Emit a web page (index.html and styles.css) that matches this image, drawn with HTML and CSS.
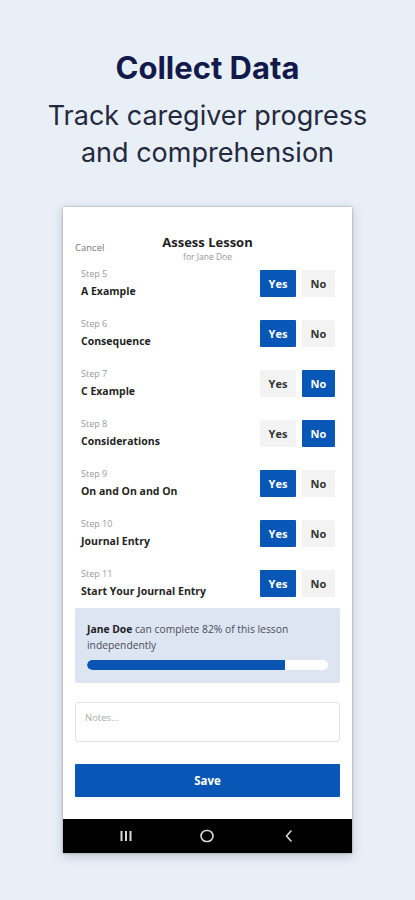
FILE: index.html
```html
<!DOCTYPE html>
<html lang="en">
<head>
<meta charset="utf-8">
<title>Collect Data</title>
<link rel="stylesheet" href="styles.css">
</head>
<body>
<main class="page">
  <h1 class="title">Collect Data</h1>
  <p class="subtitle">Track caregiver progress<br>and comprehension</p>

  <section class="phone">
    <div class="screen">
      <header class="app-header">
        <span class="cancel">Cancel</span>
        <div class="heading">
          <div class="heading-title">Assess Lesson</div>
          <div class="heading-sub">for Jane Doe</div>
        </div>
        <span></span>
      </header>

      <ul class="steps">
        <li class="step">
          <div class="step-text"><div class="step-label">Step 5</div><div class="step-name">A Example</div></div>
          <div class="toggle"><span class="btn yes on">Yes</span><span class="btn no">No</span></div>
        </li>
        <li class="step">
          <div class="step-text"><div class="step-label">Step 6</div><div class="step-name">Consequence</div></div>
          <div class="toggle"><span class="btn yes on">Yes</span><span class="btn no">No</span></div>
        </li>
        <li class="step">
          <div class="step-text"><div class="step-label">Step 7</div><div class="step-name">C Example</div></div>
          <div class="toggle"><span class="btn yes">Yes</span><span class="btn no on">No</span></div>
        </li>
        <li class="step">
          <div class="step-text"><div class="step-label">Step 8</div><div class="step-name">Considerations</div></div>
          <div class="toggle"><span class="btn yes">Yes</span><span class="btn no on">No</span></div>
        </li>
        <li class="step">
          <div class="step-text"><div class="step-label">Step 9</div><div class="step-name">On and On and On</div></div>
          <div class="toggle"><span class="btn yes on">Yes</span><span class="btn no">No</span></div>
        </li>
        <li class="step">
          <div class="step-text"><div class="step-label">Step 10</div><div class="step-name">Journal Entry</div></div>
          <div class="toggle"><span class="btn yes on">Yes</span><span class="btn no">No</span></div>
        </li>
        <li class="step">
          <div class="step-text"><div class="step-label">Step 11</div><div class="step-name">Start Your Journal Entry</div></div>
          <div class="toggle"><span class="btn yes on">Yes</span><span class="btn no">No</span></div>
        </li>
      </ul>

      <div class="summary">
        <p class="summary-text"><span class="summary-name">Jane Doe</span> can complete 82% of this lesson independently</p>
        <div class="bar"><div class="bar-fill" style="width: 82%"></div></div>
      </div>

      <div class="notes">Notes...</div>

      <div class="save">Save</div>
    </div>

    <nav class="navbar">
      <svg class="nav-icon" width="14" height="12" viewBox="0 0 14 12"><rect x="1.5" y="1" width="2" height="10" fill="#d8d8d8"/><rect x="6" y="1" width="2" height="10" fill="#d8d8d8"/><rect x="10.5" y="1" width="2" height="10" fill="#d8d8d8"/></svg>
      <svg class="nav-icon" width="16" height="16" viewBox="0 0 16 16"><rect x="2" y="2.5" width="12" height="11" rx="5.5" fill="none" stroke="#d8d8d8" stroke-width="1.6"/></svg>
      <svg class="nav-icon" width="12" height="14" viewBox="0 0 12 14"><path d="M8 2 L3.5 7 L8 12" fill="none" stroke="#d8d8d8" stroke-width="1.6" stroke-linecap="round" stroke-linejoin="round"/></svg>
    </nav>
  </section>
</main>
</body>
</html>
```
FILE: styles.css
```css
* { box-sizing: border-box; }
html, body { margin: 0; padding: 0; }
body {
  background: #e9eff7;
  font-family: "Open Sans", "Liberation Sans", sans-serif;
  width: 415px;
  height: 900px;
  overflow: hidden;
}
.page {
  display: flex;
  flex-direction: column;
  align-items: center;
  padding-top: 50px;
}
.title {
  margin: 0;
  font-family: Inter, "Liberation Sans", sans-serif;
  font-weight: 700;
  font-size: 31px;
  line-height: 36px;
  color: #121a4c;
}
.subtitle {
  margin: 11px 0 0;
  font-family: Inter, "Liberation Sans", sans-serif;
  font-weight: 400;
  font-size: 27px;
  line-height: 37px;
  color: #25293e;
  text-align: center;
}
.phone {
  margin-top: 36px;
  width: 289px;
  background: #fff;
  box-shadow: 0 0 2px rgba(0,0,0,0.35), 0 3px 10px rgba(60,70,90,0.25);
  display: flex;
  flex-direction: column;
}
.screen {
  padding: 0 12px;
  display: flex;
  flex-direction: column;
}
.app-header {
  padding-top: 27px;
  display: grid;
  grid-template-columns: 60px 1fr 60px;
  align-items: center;
  margin-bottom: -5px;
}
.cancel {
  font-size: 9.5px;
  color: #777;
  margin-bottom: 2px;
}
.heading { text-align: center; }
.heading-title {
  font-size: 13px;
  font-weight: 700;
  line-height: 16px;
  color: #1e1e1e;
}
.heading-sub {
  font-size: 8.5px;
  line-height: 13px;
  color: #999;
}
.steps {
  list-style: none;
  margin: 0;
  padding: 0 5px 0 6px;
}
.step {
  height: 50px;
  display: flex;
  align-items: center;
  justify-content: space-between;
}
.step-label {
  font-size: 9px;
  line-height: 14px;
  color: #9a9a9a;
}
.step-name {
  margin-top: 1px;
  font-size: 10.5px;
  line-height: 18px;
  font-weight: 700;
  color: #1f1f1f;
}
.toggle {
  display: flex;
  gap: 6px;
}
.btn {
  height: 27px;
  display: flex;
  align-items: center;
  justify-content: center;
  font-size: 11px;
  font-weight: 700;
  color: #333;
  background: #f3f3f3;
  border-radius: 1px;
}
.btn.yes { width: 36px; }
.btn.no { width: 33px; }
.btn.on {
  background: #0856b5;
  color: #fff;
}
.summary {
  background: #dde4f2;
  padding: 14px 12px 13px;
  border-radius: 2px;
}
.summary-text {
  margin: 0;
  font-size: 10.3px;
  line-height: 15.5px;
  color: #4a4d58;
}
.summary-name {
  color: #222;
  font-weight: 700;
}
.bar {
  margin-top: 7px;
  height: 10px;
  background: #fff;
  border-radius: 5px;
  overflow: hidden;
}
.bar-fill {
  height: 100%;
  background: #0a55b4;
  border-radius: 5px 0 0 5px;
}
.notes {
  margin-top: 19px;
  height: 40px;
  border: 1px solid #e3e3e3;
  border-radius: 3px;
  padding: 8px 9px;
  font-size: 9.5px;
  line-height: 14px;
  color: #ababab;
}
.save {
  margin-top: 22px;
  height: 33px;
  background: #0856b5;
  color: #fff;
  font-size: 11.5px;
  font-weight: 700;
  display: flex;
  align-items: center;
  justify-content: center;
  border-radius: 1px;
}
.navbar {
  margin-top: 22px;
  height: 34px;
  background: #000;
  display: grid;
  grid-template-columns: 1fr 1fr 1fr;
  align-items: center;
  justify-items: center;
  padding: 0 22px;
}
```
